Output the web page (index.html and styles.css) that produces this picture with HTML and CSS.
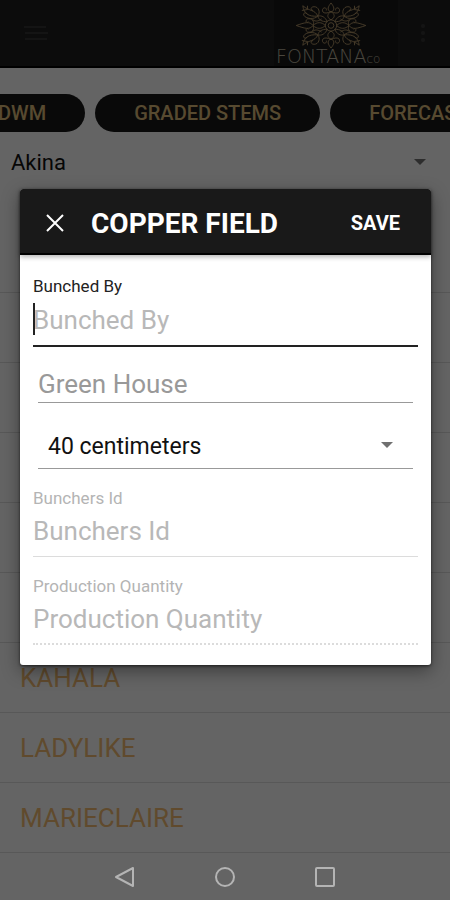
FILE: index.html
```html
<!DOCTYPE html>
<html lang="en">
<head>
    <meta charset="UTF-8">
    <meta name="viewport" content="width=device-width, initial-scale=1.0">
    <title>Fontana - Copper Field</title>
    <link rel="stylesheet" href="styles.css">
</head>
<body>
    <div class="app">
        <header class="topbar">
            <button class="icon-btn" aria-label="Menu">
                <svg width="24" height="18" viewBox="0 0 24 18" stroke="currentColor" stroke-width="2">
                    <path d="M0 3h22M1 9h23M1 15h22"/>
                </svg>
            </button>
            <div class="logo">
                <svg class="ornament" width="76" height="50" viewBox="-38 -25 76 50" fill="none" stroke="currentColor" stroke-width="1">
                    <defs>
                        <g id="leaf">
                            <path d="M0 -6C-5 -9 -4 -12 0 -15C4 -12 5 -9 0 -6Z"/>
                            <path d="M0 -14C-5 -17 -3 -20 0 -24C3 -20 5 -17 0 -14Z"/>
                            <path d="M0 -15C-5 -12 -10 -13 -9 -17C-8 -20 -4 -19 -5 -16M0 -15C5 -12 10 -13 9 -17C8 -20 4 -19 5 -16"/>
                        </g>
                        <g id="side">
                            <path d="M6 0C10 -4 15 -4 19 0C15 4 10 4 6 0Z"/>
                            <path d="M19 0C23 -5 28 -3 37 0C28 3 23 5 19 0Z"/>
                            <path d="M19 0C17 -5 21 -8 25 -7C28 -5 26 -2 24 -4M19 0C17 5 21 8 25 7C28 5 26 2 24 4"/>
                        </g>
                        <g id="corner">
                            <path d="M4 -4C6 -9 10 -11 14 -10C13 -6 10 -4 4 -4Z"/>
                            <path d="M14 -10C17 -17 23 -15 30 -21C29 -13 24 -9 14 -10Z"/>
                            <path d="M14 -10C11 -14 13 -20 18 -20C22 -20 22 -16 19 -16M14 -10C18 -6 27 -7 29 -11C30 -14 26 -14 25 -12"/>
                            <path d="M25 -17L31 -16M25 -17L25 -21M10 -7C14 -4 18 -4 20 -7"/>
                        </g>
                    </defs>
                    <circle r="3"/>
                    <circle r="6"/>
                    <use href="#leaf"/>
                    <use href="#leaf" transform="scale(1 -1)"/>
                    <use href="#side"/>
                    <use href="#side" transform="scale(-1 1)"/>
                    <use href="#corner"/>
                    <use href="#corner" transform="scale(-1 1)"/>
                    <use href="#corner" transform="scale(1 -1)"/>
                    <use href="#corner" transform="scale(-1 -1)"/>
                </svg>
                <div class="brand">FONTANA<small>co</small></div>
            </div>
            <button class="icon-btn" aria-label="More options">
                <svg width="6" height="20" viewBox="0 0 6 20" fill="currentColor">
                    <circle cx="3" cy="3" r="2"/><circle cx="3" cy="10" r="2"/><circle cx="3" cy="17" r="2"/>
                </svg>
            </button>
        </header>

        <main class="content">
            <nav class="tabs">
                <button class="tab">DWM</button>
                <button class="tab">GRADED STEMS</button>
                <button class="tab">FORECAST</button>
            </nav>
            <div class="select-wrap farm">
                <select aria-label="Farm">
                    <option>Akina</option>
                </select>
            </div>
            <ul class="varieties">
                <li></li>
                <li></li>
                <li></li>
                <li></li>
                <li></li>
                <li></li>
                <li>KAHALA</li>
                <li>LADYLIKE</li>
                <li>MARIECLAIRE</li>
            </ul>
        </main>

        <div class="scrim">
            <form class="dialog" role="dialog" aria-labelledby="dialog-title">
                <div class="dialog-header">
                    <button type="button" class="close" aria-label="Close">
                        <svg width="18" height="18" viewBox="0 0 18 18" stroke="currentColor" stroke-width="2">
                            <path d="M1 1l16 16M17 1L1 17"/>
                        </svg>
                    </button>
                    <h2 id="dialog-title">COPPER FIELD</h2>
                    <button type="button" class="save">SAVE</button>
                </div>
                <div class="dialog-body">
                    <div class="field active">
                        <label for="bunched-by">Bunched By</label>
                        <div class="caret-box">
                            <input id="bunched-by" type="text" placeholder="Bunched By">
                        </div>
                    </div>
                    <div class="field inset">
                        <input type="text" aria-label="Green House" placeholder="Green House">
                    </div>
                    <div class="select-wrap length">
                        <select aria-label="Length">
                            <option>40 centimeters</option>
                        </select>
                    </div>
                    <div class="field">
                        <label for="bunchers-id">Bunchers Id</label>
                        <input id="bunchers-id" type="text" placeholder="Bunchers Id">
                    </div>
                    <div class="field readonly">
                        <label for="quantity">Production Quantity</label>
                        <input id="quantity" type="text" placeholder="Production Quantity" readonly>
                    </div>
                </div>
            </form>
        </div>
    </div>

    <footer class="navbar">
        <button aria-label="Back">
            <svg width="22" height="22" viewBox="0 0 22 22"><path d="M19 2v18L2 11z"/></svg>
        </button>
        <button aria-label="Home">
            <svg width="22" height="22" viewBox="0 0 22 22"><circle cx="11" cy="11" r="9"/></svg>
        </button>
        <button aria-label="Recent apps">
            <svg width="22" height="22" viewBox="0 0 22 22"><rect x="2" y="2" width="18" height="18" rx="1"/></svg>
        </button>
    </footer>
</body>
</html>
```
FILE: styles.css
```css
* { box-sizing: border-box; }
body {
    margin: 0;
    min-height: 100vh;
    display: flex;
    flex-direction: column;
    font-family: Roboto, sans-serif;
    background: #646464;
}
button, input, select {
    font-family: inherit;
    border: none;
    background: none;
    padding: 0;
    margin: 0;
    outline: none;
}
svg { display: block; }
.app {
    position: relative;
    flex: 1;
    background: #fbfbfb;
}

/* top bar */
.topbar {
    display: flex;
    align-items: center;
    height: 68px;
    padding: 0 24px;
    background: #202020;
    border-bottom: 2px solid #000;
}
.icon-btn { color: #343434; }
.logo {
    display: flex;
    flex-direction: column;
    align-items: flex-start;
    width: 124px;
    height: 66px;
    padding-top: 2px;
    padding-left: 2px;
    margin-left: auto;
    margin-right: 22px;
    background: #181818;
    color: #b09468;
}
.ornament { margin-left: 17px; }
.brand {
    font-family: "DejaVu Sans", sans-serif;
    font-size: 19px;
    font-weight: 200;
    line-height: 14px;
    color: #b8b09c;
}
.brand small { font-size: 12px; }

/* page */
.content { overflow: hidden; }
.tabs {
    display: flex;
    gap: 10px;
    padding-top: 26px;
    margin-left: -41px;
}
.tab {
    flex: none;
    height: 38px;
    padding: 0 39px;
    border-radius: 20px;
    background: #181818;
    color: #d9b878;
    font-size: 20px;
    font-weight: 500;
}
.select-wrap {
    position: relative;
    display: flex;
}
.select-wrap::after {
    content: "";
    position: absolute;
    top: 50%;
    right: 20px;
    margin-top: -3px;
    border: 6px solid transparent;
    border-top-color: #707070;
    border-bottom: none;
    pointer-events: none;
}
.select-wrap select {
    appearance: none;
    flex: 1;
    color: #111;
    font-size: 22px;
}
.farm {
    height: 60px;
    padding: 0 0 0 11px;
}
.farm::after { right: 24px; }
.varieties {
    list-style: none;
    margin: 0;
    padding: 31px 0 0;
}
.varieties li {
    height: 70px;
    padding: 0 20px;
    border-bottom: 1px solid #dcdcdc;
    color: #f0ba70;
    font-size: 26px;
    line-height: 70px;
}

/* dialog */
.scrim {
    position: absolute;
    inset: 0;
    display: flex;
    align-items: center;
    justify-content: center;
    padding: 0 19px 0 20px;
    background: rgba(0, 0, 0, 0.6);
}
.dialog {
    flex: 1;
    max-width: 560px;
    background: #fff;
    border-radius: 3px;
    box-shadow: 0 6px 18px rgba(0, 0, 0, 0.4), 0 1px 3px rgba(0, 0, 0, 0.6);
}
.dialog-header {
    display: flex;
    align-items: center;
    height: 66px;
    padding: 4px 31px 0 26px;
    background: #191919;
    border-bottom: 2px solid #000;
    border-radius: 3px 3px 0 0;
    box-shadow: 0 2px 5px rgba(0, 0, 0, 0.3);
    color: #fff;
}
.dialog-header h2 {
    flex: 1;
    margin: 0 0 0 27px;
    font-size: 28px;
    font-weight: 700;
}
.close, .save { color: #fff; }
.save {
    font-size: 20px;
    font-weight: 700;
}
.dialog-body {
    display: flex;
    flex-direction: column;
    gap: 19px;
    padding: 21px 13px 20px;
}
.field {
    display: flex;
    flex-direction: column;
    color: #b4b4b4;
}
.field label {
    font-size: 17px;
    line-height: 20px;
}
.field input {
    width: 100%;
    height: 49px;
    padding-bottom: 2px;
    border-bottom: 1px solid #dcdcdc;
    color: #222;
    font-size: 26px;
}
.field input::placeholder { color: #b8b8b8; }
.active { color: #222; }
.caret-box { position: relative; }
.caret-box::before {
    content: "";
    position: absolute;
    left: 0;
    top: 7px;
    width: 2px;
    height: 32px;
    background: #222;
}
.active input {
    display: block;
    height: 51px;
    border-bottom: 2px solid #222;
}
.inset { margin: 0 5px; }
.inset input {
    height: 37px;
    padding: 0;
    border-bottom-color: #999;
}
.inset input::placeholder { color: #999; }
.length {
    height: 47px;
    margin: 0 5px;
    padding: 2px 0 0 10px;
    border-bottom: 1px solid #999;
}
.length select { font-size: 23px; }
.readonly input { border-bottom: 2px dotted #dcdcdc; }

/* system buttons */
.navbar {
    display: flex;
    justify-content: center;
    gap: 78px;
    height: 46px;
}
.navbar svg {
    fill: none;
    stroke: #b4b4b4;
    stroke-width: 2;
    stroke-linejoin: round;
}
```
